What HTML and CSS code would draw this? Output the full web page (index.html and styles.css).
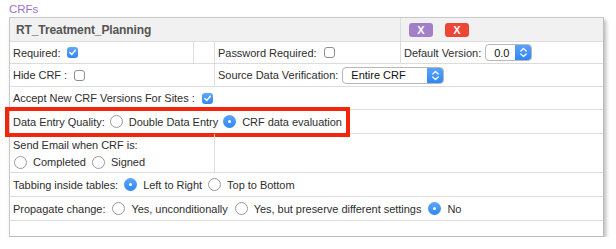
FILE: index.html
```html
<!DOCTYPE html>
<html>
<head>
<meta charset="utf-8">
<link rel="stylesheet" href="styles.css">
</head>
<body>
<div class="section-title">CRFs</div>
<div class="crf">
  <div class="cell head span3"><span class="crf-name">RT_Treatment_Planning</span></div>
  <div class="cell head last btns"><span class="xbtn purple">X</span><span class="xbtn red">X</span></div>

  <div class="cell">Required:<span class="cb on"><svg width="11" height="11" viewBox="0 0 11 11"><path d="M2.8 5.6 L4.7 7.6 L8.3 3.2" fill="none" stroke="#fff" stroke-width="1.5" stroke-linecap="round" stroke-linejoin="round"/></svg></span></div>
  <div class="cell"></div>
  <div class="cell">Password Required:<span class="cb"></span></div>
  <div class="cell last">Default Version:<span class="sel sel-ver"><span class="sel-text">0.0</span><span class="sel-arrow"><svg width="9" height="11" viewBox="0 0 9 11"><path d="M1.8 4 L4.5 1.5 L7.2 4 M1.8 7 L4.5 9.5 L7.2 7" fill="none" stroke="#fff" stroke-width="1.3" stroke-linecap="round" stroke-linejoin="round"/></svg></span></span></div>

  <div class="cell span2">Hide CRF :<span class="cb"></span></div>
  <div class="cell span2 last">Source Data Verification:<span class="sel sel-sdv"><span class="sel-text">Entire CRF</span><span class="sel-arrow"><svg width="9" height="11" viewBox="0 0 9 11"><path d="M1.8 4 L4.5 1.5 L7.2 4 M1.8 7 L4.5 9.5 L7.2 7" fill="none" stroke="#fff" stroke-width="1.3" stroke-linecap="round" stroke-linejoin="round"/></svg></span></span></div>

  <div class="cell span4 last">Accept New CRF Versions For Sites :<span class="cb on"><svg width="11" height="11" viewBox="0 0 11 11"><path d="M2.8 5.6 L4.7 7.6 L8.3 3.2" fill="none" stroke="#fff" stroke-width="1.5" stroke-linecap="round" stroke-linejoin="round"/></svg></span></div>

  <div class="cell span4 last">
    <div class="highlight">
      <span>Data Entry Quality:</span><span class="rd"></span><span>Double Data Entry</span><span class="rd on"></span><span>CRF data evaluation</span>
    </div>
  </div>

  <div class="cell span2 stack">
    <div>Send Email when CRF is:</div>
    <div class="line first"><span class="rd"></span><span>Completed</span><span class="rd"></span><span>Signed</span></div>
  </div>
  <div class="cell span2 last"></div>

  <div class="cell span4 last"><span>Tabbing inside tables:</span><span class="rd on"></span><span>Left to Right</span><span class="rd"></span><span>Top to Bottom</span></div>

  <div class="cell span4 last prop"><span>Propagate change:</span><span class="rd"></span><span>Yes, unconditionally</span><span class="rd"></span><span>Yes, but preserve different settings</span><span class="rd on"></span><span>No</span></div>

  <div class="cell span4 last bottom"></div>
</div>
</body>
</html>
```

FILE: styles.css
```css
* { box-sizing: border-box; }
body {
  margin: 0;
  background: #fff;
  font-family: "Liberation Sans", Arial, sans-serif;
  font-size: 11px;
  letter-spacing: -0.03px;
  color: #2e2e2e;
}
.section-title {
  height: 17px;
  padding: 3px 0 0 9px;
  line-height: 12px;
  color: #9d6fcb;
  font-size: 11.5px;
}
.crf {
  margin-left: 9px;
  width: 595px;
  border: 1px solid #c9c9c9;
  border-right-color: #bdbdbd;
  border-bottom-color: #bdbdbd;
  display: grid;
  grid-template-columns: 184px 21px 186px 202px;
  grid-template-rows: 24px 22px 23px 23px 24px 39px 24px 24px 15px;
  box-shadow: 2px 3px 4px rgba(0,0,0,0.28);
  background: #fff;
}
.cell {
  display: flex;
  align-items: center;
  padding: 0 3px;
  border-right: 1px solid #dcdcdc;
  border-bottom: 1px solid #dcdcdc;
  white-space: nowrap;
}
.cell.last { border-right: none; }
.cell.bottom { border-bottom: none; }
.span2 { grid-column: span 2; }
.span3 { grid-column: span 3; }
.span4 { grid-column: span 4; }
.head { background: #f1f1f1; }
.crf-name {
  font-weight: bold;
  font-size: 12px;
  letter-spacing: -0.1px;
  color: #555;
  padding-left: 3px;
}
.btns { padding-left: 8px; gap: 12px; }
.xbtn {
  width: 24px;
  height: 14px;
  border-radius: 3px;
  color: #fff;
  font-weight: bold;
  font-size: 11px;
  line-height: 14px;
  text-align: center;
  letter-spacing: 0;
}
.xbtn.purple { background: #a27fc7; }
.xbtn.red { background: #ee4535; }

.cb {
  display: inline-flex;
  width: 11px;
  height: 11px;
  margin-left: 7px;
  border-radius: 3px;
  border: 1px solid #8f8f8f;
  background: #fff;
}
.cb.on {
  border: none;
  background: linear-gradient(#62a7fb, #2f86f5);
}

.rd {
  display: inline-block;
  flex: none;
  width: 13px;
  height: 13px;
  margin: 0 6px 0 6px;
  border-radius: 50%;
  border: 1px solid #9a9a9a;
  background: #fff;
  position: relative;
}
.rd.on {
  border: none;
  background: linear-gradient(#5ea5fb, #2f86f5);
}
.rd.on::after {
  content: "";
  position: absolute;
  left: 5px;
  top: 5px;
  width: 3px;
  height: 3px;
  border-radius: 50%;
  background: #fff;
}

.sel {
  display: inline-flex;
  align-items: stretch;
  height: 17px;
  border: 1px solid #b8b8b8;
  border-radius: 4px;
  background: #fff;
  color: #111;
  letter-spacing: 0;
  overflow: hidden;
}
.sel-text {
  flex: 1;
  display: flex;
  align-items: center;
  padding-left: 8px;
  font-size: 11px;
}
.sel-arrow {
  width: 16px;
  display: flex;
  align-items: center;
  justify-content: center;
  background: linear-gradient(#5aa2fa, #2f86f5);
}
.sel-ver { width: 47px; margin-left: 4px; }
.sel-sdv { width: 102px; margin-left: 4px; }

.highlight {
  display: inline-flex;
  align-items: center;
  height: 14px;
  outline: 4px solid #f4250d;
  outline-offset: 4px;
}
.highlight .rd { margin: 0 6px 0 5px; }

.stack {
  flex-direction: column;
  align-items: flex-start;
  justify-content: center;
  gap: 5px;
  padding-top: 1px;
}
.line { display: flex; align-items: center; }
.line.first .rd:first-child { margin-left: 1px; }

.prop .rd { margin: 0 6px 0 7px; }
```
